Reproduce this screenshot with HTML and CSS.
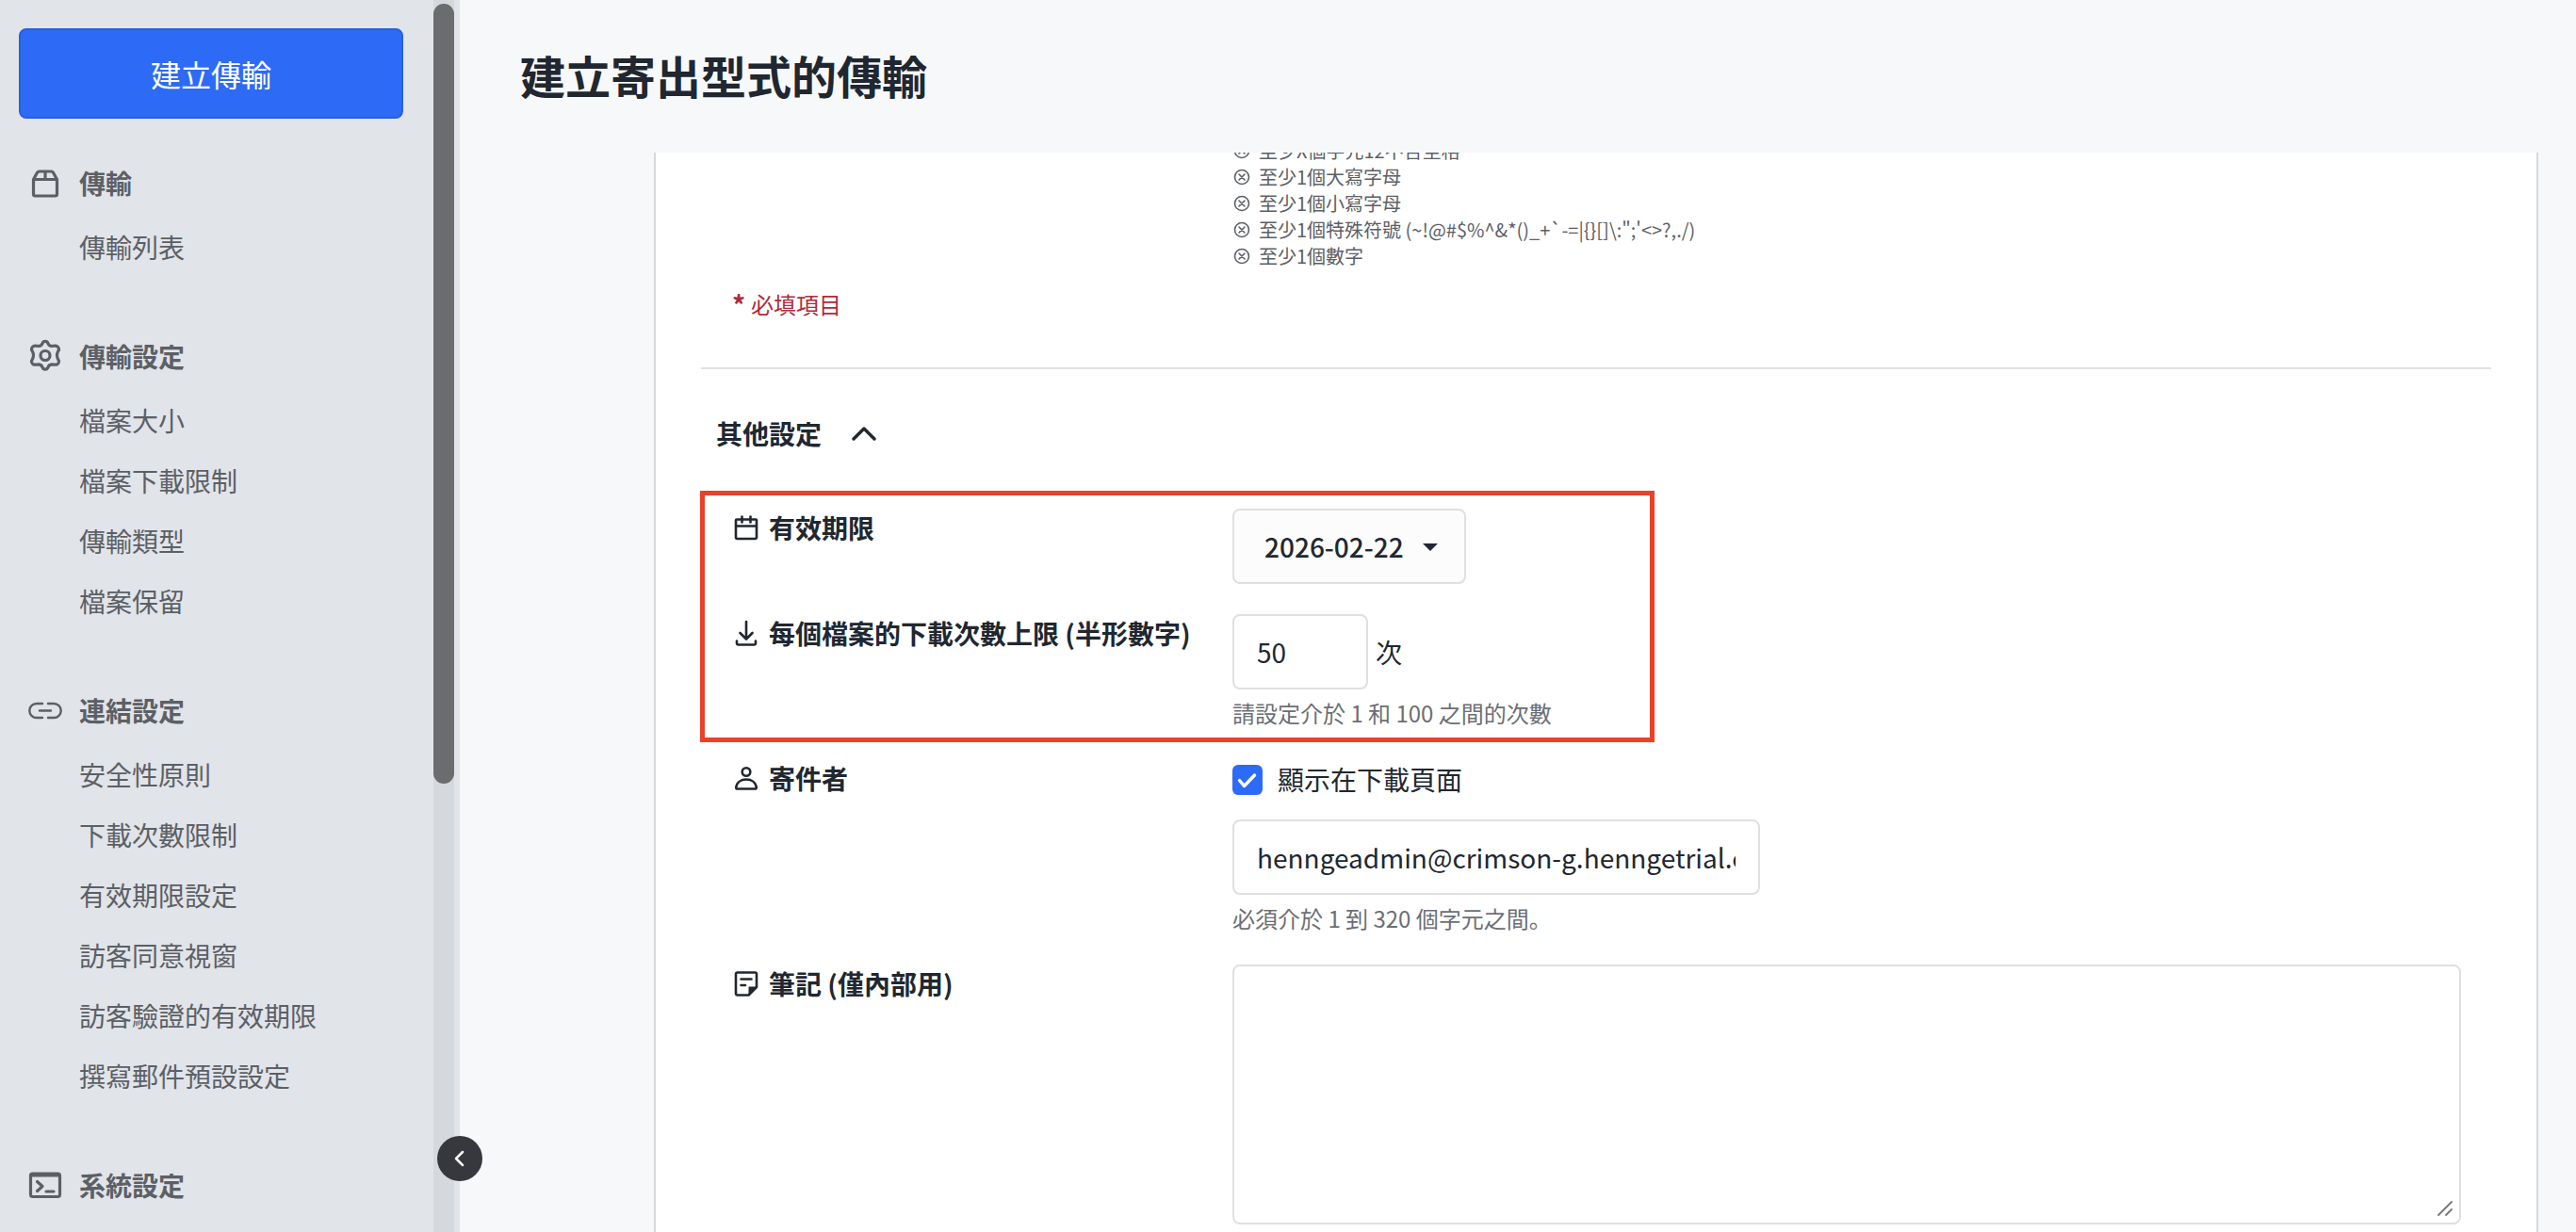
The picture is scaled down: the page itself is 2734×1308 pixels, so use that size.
FILE: index.html
```html
<!DOCTYPE html>
<html lang="ja">
<head>
  <meta charset="UTF-8" />
  <meta name="viewport" content="width=device-width, initial-scale=1.0" />
  <title>建立寄出型式的傳輸</title>
  <link rel="stylesheet" href="styles.css">
</head>
<body>
  <aside class="sidebar">
    <nav class="sidebar-nav">
      <button class="create-btn">建立傳輸</button>

      <div class="nav-group">
        <h2 class="nav-heading">
          <svg class="nav-icon" viewBox="0 0 36 36"><path d="M5.500 14.500h25v15.500a2 2 0 0 1-2 2h-21a2 2 0 0 1-2-2zM5.500 14.500l4-7.200a2.500 2.500 0 0 1 2.200-1.300h12.600a2.500 2.500 0 0 1 2.200 1.300l4 7.200M18 6v8" /></svg>
          傳輸
        </h2>
        <a class="nav-item">傳輸列表</a>
      </div>

      <div class="nav-group">
        <h2 class="nav-heading">
          <svg class="nav-icon" viewBox="0 0 36 36"><path d="M15.200 4.200q.6-1.900 2.800-1.900t2.800 1.900q.9 2.900 4.200 3.300 2.800-.5 4.900-.2 1.600.5 2.400 2.300.7 1.700-.6 3.200-2.400 4.400 0 8.800 1.300 1.500.6 3.200-.8 1.800-2.400 2.300-2.100.3-4.900-.2-3.300.4-4.200 3.300-.6 1.900-2.800 1.900t-2.800-1.900q-.9-2.900-4.200-3.300-2.800.5-4.900.2-1.600-.5-2.400-2.300-.7-1.700.6-3.200 2.400-4.400 0-8.800-1.300-1.500-.6-3.200.8-1.800 2.400-2.300 2.100-.3 4.900.2 3.300-.4 4.200-3.300z" /><circle cx="18" cy="17.500" r="5" /></svg>
          傳輸設定
        </h2>
        <a class="nav-item">檔案大小</a>
        <a class="nav-item">檔案下載限制</a>
        <a class="nav-item">傳輸類型</a>
        <a class="nav-item">檔案保留</a>
      </div>

      <div class="nav-group">
        <h2 class="nav-heading">
          <svg class="nav-icon thin" viewBox="0 0 36 36"><path d="M15 11H8.800a7.500 7.500 0 0 0 0 15H15M21 11h6.200a7.500 7.500 0 0 1 0 15H21M12 18.500h12" /></svg>
          連結設定
        </h2>
        <a class="nav-item">安全性原則</a>
        <a class="nav-item">下載次數限制</a>
        <a class="nav-item">有效期限設定</a>
        <a class="nav-item">訪客同意視窗</a>
        <a class="nav-item">訪客驗證的有效期限</a>
        <a class="nav-item">撰寫郵件預設設定</a>
      </div>

      <div class="nav-group">
        <h2 class="nav-heading">
          <svg class="nav-icon" viewBox="0 0 36 36"><rect x="2.500" y="6" width="31" height="24.500" rx="2" /><path d="M3 8h30M9.500 14.500l5.500 5-5.500 5M19 25h8" /></svg>
          系統設定
        </h2>
      </div>
    </nav>
    <div class="scrollbar"><div class="scrollbar-thumb"></div></div>
    <button class="collapse-btn">
      <svg viewBox="0 0 48 48"><path d="M27 17l-7 7 7 7" /></svg>
    </button>
  </aside>

  <main class="main">
    <h1 class="page-title">建立寄出型式的傳輸</h1>

    <div class="panel">
      <ul class="rules">
        <li><svg class="rule-icon" viewBox="0 0 20 20"><circle cx="10" cy="10" r="7.500" /><path d="M7 7l6 6M13 7l-6 6" /></svg>至少X個字元12不含空格</li>
        <li><svg class="rule-icon" viewBox="0 0 20 20"><circle cx="10" cy="10" r="7.500" /><path d="M7 7l6 6M13 7l-6 6" /></svg>至少1個大寫字母</li>
        <li><svg class="rule-icon" viewBox="0 0 20 20"><circle cx="10" cy="10" r="7.500" /><path d="M7 7l6 6M13 7l-6 6" /></svg>至少1個小寫字母</li>
        <li><svg class="rule-icon" viewBox="0 0 20 20"><circle cx="10" cy="10" r="7.500" /><path d="M7 7l6 6M13 7l-6 6" /></svg>至少1個特殊符號 (~!@#$%^&amp;*()_+`-=|{}[]\:";'&lt;&gt;?,./)</li>
        <li><svg class="rule-icon" viewBox="0 0 20 20"><circle cx="10" cy="10" r="7.500" /><path d="M7 7l6 6M13 7l-6 6" /></svg>至少1個數字</li>
      </ul>

      <p class="required"><span class="star">*</span>必填項目</p>

      <section class="other">
        <h3 class="section-title">
          其他設定
          <svg class="chevron" viewBox="0 0 26 16"><path d="M2 14L13 3l11 11" /></svg>
        </h3>

        <div class="form">
          <div class="highlight">
            <div class="row">
              <div class="label">
                <svg class="label-icon" viewBox="0 0 28 28"><path d="M4 5.500h20a1 1 0 0 1 1 1v18a1.500 1.500 0 0 1-1.500 1.500h-19a1.500 1.500 0 0 1-1.500-1.500v-18a1 1 0 0 1 1-1zM3 12.500h22M9.500 2.500v6M18.500 2.500v6" /></svg>
                有效期限
              </div>
              <div class="field">
                <button class="date-btn">2026-02-22<span class="caret"></span></button>
              </div>
            </div>
            <div class="row">
              <div class="label">
                <svg class="label-icon" viewBox="0 0 28 28"><path d="M14 2v18M7.500 14l6.500 6.500 6.500-6.500M4 22.500v2.500a1.500 1.500 0 0 0 1.500 1.500h17a1.500 1.500 0 0 0 1.500-1.500v-2.500" /></svg>
                每個檔案的下載次數上限 (半形數字)
              </div>
              <div class="field">
                <div class="inline">
                  <input class="input count" type="text" value="50" />
                  <span>次</span>
                </div>
                <p class="hint">請設定介於 1 和 100 之間的次數</p>
              </div>
            </div>
          </div>

          <div class="row">
            <div class="label">
              <svg class="label-icon" viewBox="0 0 28 28"><circle cx="14" cy="7.500" r="4.300" /><path d="M4.500 25.500a1.300 1.300 0 0 1-1.300-1.500c.8-5.500 5.300-8.500 10.800-8.500s10 3 10.800 8.500a1.300 1.300 0 0 1-1.300 1.500z" /></svg>
              寄件者
            </div>
            <div class="field">
              <label class="check">
                <svg class="checkbox" viewBox="0 0 32 32"><path d="M7.500 16.500l5 6L23.500 11" /></svg>
                <span class="check-text">顯示在下載頁面</span>
              </label>
              <input class="input email" type="text" value="henngeadmin@crimson-g.henngetrial.com" />
              <p class="hint">必須介於 1 到 320 個字元之間。</p>
            </div>
          </div>

          <div class="row">
            <div class="label">
              <svg class="label-icon" viewBox="0 0 28 28"><path d="M4.500 2.500h19a1.500 1.500 0 0 1 1.500 1.500v14l-8.500 8.500h-12a1.500 1.500 0 0 1-1.500-1.500v-21a1.500 1.500 0 0 1 1.500-1.500zM8.500 9.500h11M8.500 16h4.500" /><path class="fold" d="M17 26V18h8z" /></svg>
              筆記 (僅內部用)
            </div>
            <div class="field note">
              <textarea class="input memo"></textarea>
              <svg class="grip" viewBox="0 0 16 16"><path d="M1 15L15 1M9 15l6-6" /></svg>
            </div>
          </div>
        </div>
      </section>
    </div>
  </main>
</body>
</html>
```

FILE: styles.css
```css
* {
  box-sizing: border-box;
  margin: 0;
  padding: 0;
}

body {
  font-family: 'Noto Sans CJK JP', 'Noto Sans CJK TC', sans-serif;
  font-size: 28px;
  color: #212730;
  background: #f7f8fa;
  display: flex;
  height: 100vh;
  overflow: hidden;
}

button,
input,
textarea {
  font: inherit;
  color: inherit;
}

svg {
  fill: none;
  stroke: currentColor;
  stroke-linecap: round;
  stroke-linejoin: round;
  flex: none;
}

/* sidebar */
.sidebar {
  position: relative;
  display: flex;
  width: 488px;
  flex: none;
  padding-right: 6px;
  background: #e1e4e9;
  color: #5c6065;
}

.sidebar-nav {
  flex: 1;
  height: 100vh;
  overflow: hidden;
  padding: 30px 32px 0 20px;
}

.create-btn {
  display: block;
  width: 100%;
  height: 96px;
  margin-bottom: 32px;
  border: 2px solid #295fdf;
  border-radius: 8px;
  background: #2d6bf6;
  color: #fff;
  font-size: 32px;
}

.nav-group {
  margin-bottom: 48px;
}

.nav-heading {
  display: flex;
  align-items: center;
  gap: 18px;
  height: 72px;
  padding-left: 10px;
  font-size: 28px;
  font-weight: 700;
}

.nav-icon {
  width: 36px;
  height: 36px;
  stroke-width: 3.2;
}

.nav-icon.thin {
  stroke-width: 2.4;
}

.nav-item {
  display: block;
  height: 64px;
  line-height: 64px;
  padding-left: 64px;
}

.scrollbar {
  width: 22px;
  padding-top: 4px;
  background: #d5d8dd;
}

.scrollbar-thumb {
  height: 828px;
  border-radius: 11px;
  background: #6b6c6e;
}

.collapse-btn {
  position: absolute;
  right: -24px;
  bottom: 54px;
  width: 48px;
  height: 48px;
  border: none;
  border-radius: 50%;
  background: #37383d;
  color: #fff;
}

.collapse-btn svg {
  display: block;
  stroke-width: 2.5;
}

/* main */
.main {
  flex: 1;
  display: flex;
  flex-direction: column;
  padding: 0 40px 0 64px;
}

.page-title {
  height: 162px;
  line-height: 158px;
  font-size: 48px;
  font-weight: 700;
}

.panel {
  flex: 1;
  min-height: 0;
  overflow: hidden;
  margin-left: 142px;
  padding: 0 48px;
  border: solid #d5d8dd;
  border-width: 0 2px;
  background: #fff;
}

.rules {
  list-style: none;
  margin: -17px 0 22px 564px;
  color: #5c6065;
  font-size: 20px;
}

.rules li {
  display: flex;
  align-items: center;
  gap: 8px;
  height: 28px;
}

.rule-icon {
  width: 20px;
  height: 20px;
  margin-top: 2px;
  stroke-width: 1.6;
}

.required {
  display: flex;
  gap: 8px;
  height: 36px;
  line-height: 32px;
  padding-left: 33px;
  color: #b02a37;
  font-size: 24px;
}

.star {
  width: 12px;
  font-size: 28px;
  font-weight: 700;
}

.other {
  margin-top: 47px;
  border-top: 2px solid #e0e1e1;
  padding-top: 46px;
}

.section-title {
  display: flex;
  align-items: center;
  gap: 32px;
  height: 44px;
  margin-bottom: 58px;
  padding-left: 16px;
  font-size: 28px;
  font-weight: 700;
}

.chevron {
  width: 26px;
  height: 16px;
  stroke-width: 3.4;
}

.form,
.highlight {
  display: flex;
  flex-direction: column;
  gap: 32px;
}

.form {
  padding: 0 32px 0 36px;
}

.highlight {
  position: relative;
}

/* red frame drawn around the first two rows */
.highlight::before {
  content: '';
  box-sizing: border-box;
  position: absolute;
  top: -19px;
  left: -37px;
  width: 1013px;
  height: 267px;
  border: 5px solid #ea4128;
  pointer-events: none;
}

.row {
  display: flex;
}

.label {
  display: flex;
  align-items: center;
  gap: 10px;
  width: 528px;
  height: 40px;
  margin-left: -2px;
  margin-right: 2px;
  font-weight: 700;
}

.label-icon {
  width: 28px;
  height: 28px;
  stroke-width: 2.6;
}

.fold {
  fill: currentColor;
  stroke-width: 1;
}

.field {
  flex: 1;
}

.date-btn {
  display: flex;
  align-items: center;
  justify-content: space-between;
  width: 248px;
  height: 80px;
  padding: 0 28px 0 32px;
  border: 2px solid #dfe0e1;
  border-radius: 8px;
  background: #fcfcfc;
  font-weight: 500;
}

.caret {
  margin-top: 2px;
  border: 8px solid transparent;
  border-top-color: #212730;
  border-bottom: none;
}

.inline {
  display: flex;
  align-items: center;
  gap: 8px;
}

.input {
  display: block;
  height: 80px;
  padding: 0 24px;
  border: 2px solid #dfe0e1;
  border-radius: 8px;
  background: #fff;
}

.count {
  width: 144px;
}

.email {
  width: 560px;
}

.hint {
  margin-top: 10px;
  padding-bottom: 2px;
  line-height: 30px;
  color: #6c6f73;
  font-size: 24px;
}

.check {
  display: flex;
  align-items: center;
  gap: 16px;
  height: 44px;
  margin-bottom: 20px;
}

.check-text {
  padding-bottom: 3px;
}

.checkbox {
  width: 32px;
  height: 32px;
  border-radius: 6px;
  background: #2d6bf6;
  color: #fff;
  stroke-width: 3.5;
}

.note {
  position: relative;
}

.memo {
  width: 100%;
  height: 276px;
  resize: none;
}

.grip {
  position: absolute;
  right: 9px;
  top: 251px;
  width: 16px;
  height: 16px;
  color: #77787a;
  stroke-width: 1.8;
}
```
